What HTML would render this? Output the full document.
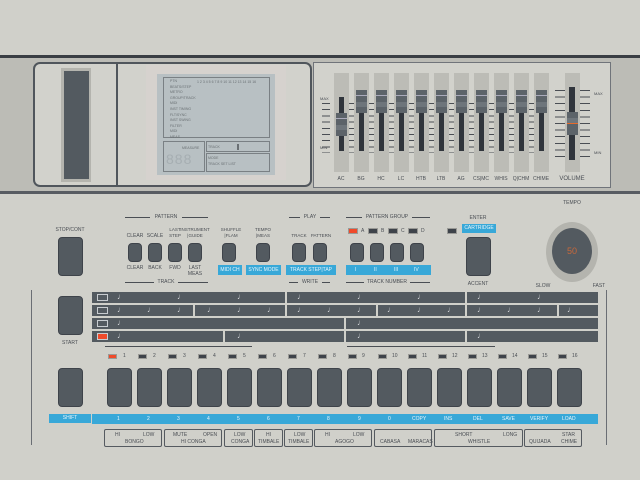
<!DOCTYPE html>
<html><head><meta charset="utf-8"><style>
*{margin:0;padding:0;box-sizing:border-box}
body{width:640px;height:480px;background:#d0d0ca;position:relative;overflow:hidden;font-family:"Liberation Sans",sans-serif;color:#4a4e54}
div{position:absolute}
.t{font-size:5px;line-height:6px;white-space:nowrap;text-align:center;letter-spacing:0}
.b{background:#535a60;border:1px solid #3e434a;border-radius:4px}
.sb{background:#535a60;border:1px solid #3e434a;border-radius:4px;width:14px;height:19px;top:243px}
.bl{background:#38a8d8;color:#e8f4fa}
.hl{height:1px;background:#4a4e54}
.strip{width:15px;top:73px;height:99px;background:#bcbcb6}
.slot{width:5px;background:#30353c;top:113px;height:38px}
.hd{width:11px;height:23px;background:#5c6369;top:90px}
.hd:before{content:"";position:absolute;left:0;right:0;top:5px;height:1px;background:#aab}
.hd:after{content:"";position:absolute;left:0;right:0;top:12px;height:5px;background:#6e757b}
.lab{top:176px;font-size:5px;width:20px;text-align:center}
.row{background:#535a60;height:11px}
.led{width:9px;height:5px;background:#3e434a;border:1px solid #9a9a96;top:354px}
.n{font-size:5px;top:353px}
.st{width:25px;height:39px;top:368px}
.lb{border:1px solid #555a60;border-radius:2px;top:429px;height:18px;font-size:5px}
.lb span{position:absolute;white-space:nowrap}
.nt{color:#e0e2e4;font-size:8px;line-height:8px}
</style></head><body>
<div style="left:0;top:55px;width:640px;height:3px;background:#3a3e44"></div>
<div style="left:0;top:58px;width:640px;height:133px;background:#bcbcb6"></div>
<div style="left:0;top:191px;width:640px;height:3px;background:#585c62"></div>

<div style="left:33px;top:62px;width:279px;height:125px;border:2px solid #50565c;border-radius:7px;background:#d2d2cc"></div>
<div style="left:116px;top:64px;width:2px;height:121px;background:#50565c"></div>
<div style="left:61px;top:68px;width:30px;height:114px;background:#b4b4ae"></div>
<div style="left:64px;top:71px;width:25px;height:108px;background:#535a60"></div>
<div style="left:146px;top:65px;width:140px;height:115px;background:#d6d2ce"></div>
<div style="left:157px;top:74px;width:118px;height:101px;background:#b8c0c3"></div>
<div style="left:163px;top:77px;width:107px;height:61px;border:1px solid #7a8084"></div>
<div style="left:163px;top:141px;width:42px;height:31px;border:1px solid #7a8084"></div>
<div style="left:206px;top:141px;width:64px;height:11px;border:1px solid #7a8084"></div>
<div style="left:206px;top:153px;width:64px;height:19px;border:1px solid #7a8084"></div>
<div class="t" style="left:170px;top:79px;font-size:3.5px;color:#6a7074;text-align:left;line-height:5.6px">PTN<br>BEATS/STEP<br>METRO<br>GROUP/TRACK<br>MIDI<br>INST TIMING<br>FLT/SYNC<br>INST SWING<br>FILTER<br>MIDI<br>MEAS</div>
<div class="t" style="left:197px;top:79px;font-size:3.5px;color:#6a7074">1 2 3 4 5 6 7 8 9 10 11 12 13 14 15 16</div>
<div class="t" style="left:182px;top:145px;font-size:3.5px;color:#6a7074">MEASURE</div>
<div style="left:166px;top:151px;font-size:14px;color:#a6aeb2;letter-spacing:1px">888</div>
<div class="t" style="left:208px;top:144px;font-size:3.5px;color:#6a7074">TRACK</div>
<div style="left:237px;top:144px;width:2px;height:6px;background:#6a7074"></div>
<div class="t" style="left:208px;top:155px;font-size:3.5px;color:#6a7074;text-align:left">MODE<br>TRACK SET LIST</div>

<div style="left:313px;top:62px;width:298px;height:126px;background:#d2d2cc;border:1px solid #70747a"></div>
<div class="t" style="left:320px;top:96px;font-size:4px">MAX</div><div class="t" style="left:320px;top:145px;font-size:4px">MIN</div>
<div class="t" style="left:594px;top:91px;font-size:4px">MAX</div><div class="t" style="left:594px;top:150px;font-size:4px">MIN</div>
<div style="left:322px;top:103px;width:226px;height:50px;background:repeating-linear-gradient(#4a4e54 0 1px,transparent 1px 6.2px)"></div>
<div style="left:330px;top:103px;width:4px;height:50px;background:#d2d2cc"></div>
<div style="left:555px;top:90px;width:10px;height:70px;background:repeating-linear-gradient(#4a4e54 0 1px,transparent 1px 6.6px)"></div>
<div style="left:580px;top:90px;width:10px;height:70px;background:repeating-linear-gradient(#4a4e54 0 1px,transparent 1px 6.6px)"></div>

<div class="strip" style="left:334px"></div><div class="slot" style="left:339px;top:97px;height:54px"></div><div class="hd" style="left:336px;top:113px"></div>
<div class="strip" style="left:354px"></div><div class="slot" style="left:359px"></div><div class="hd" style="left:356px"></div>
<div class="strip" style="left:374px"></div><div class="slot" style="left:379px"></div><div class="hd" style="left:376px"></div>
<div class="strip" style="left:394px"></div><div class="slot" style="left:399px"></div><div class="hd" style="left:396px"></div>
<div class="strip" style="left:414px"></div><div class="slot" style="left:419px"></div><div class="hd" style="left:416px"></div>
<div class="strip" style="left:434px"></div><div class="slot" style="left:439px"></div><div class="hd" style="left:436px"></div>
<div class="strip" style="left:454px"></div><div class="slot" style="left:459px"></div><div class="hd" style="left:456px"></div>
<div class="strip" style="left:474px"></div><div class="slot" style="left:479px"></div><div class="hd" style="left:476px"></div>
<div class="strip" style="left:494px"></div><div class="slot" style="left:499px"></div><div class="hd" style="left:496px"></div>
<div class="strip" style="left:514px"></div><div class="slot" style="left:519px"></div><div class="hd" style="left:516px"></div>
<div class="strip" style="left:534px"></div><div class="slot" style="left:539px"></div><div class="hd" style="left:536px"></div>
<div class="strip" style="left:565px"></div><div class="slot" style="left:569px;top:87px;height:73px;width:6px"></div>
<div style="left:567px;top:112px;width:11px;height:23px;background:#5c6369"><div style="left:0;top:6px;width:11px;height:5px;background:#6e757b"></div><div style="left:0;top:11px;width:11px;height:1px;background:#e86a2a"></div></div>
<div class="lab" style="left:331px">AC</div><div class="lab" style="left:351px">BG</div><div class="lab" style="left:371px">HC</div><div class="lab" style="left:391px">LC</div><div class="lab" style="left:411px">HTB</div><div class="lab" style="left:431px">LTB</div><div class="lab" style="left:451px">AG</div><div class="lab" style="left:471px">CS|MC</div><div class="lab" style="left:491px">WHIS</div><div class="lab" style="left:511px">Q|CHM</div><div class="lab" style="left:531px">CHIME</div>
<div class="lab" style="left:557px;width:30px;font-size:6px">VOLUME</div>

<div class="t" style="left:50px;top:227px;width:40px">STOP/CONT</div>
<div class="b" style="left:58px;top:237px;width:25px;height:39px"></div>
<div class="b" style="left:58px;top:296px;width:25px;height:39px"></div>
<div class="t" style="left:50px;top:340px;width:40px">START</div>

<div class="hl" style="left:125px;top:217px;width:83px"></div><div class="t" style="left:150px;top:214px;width:32px;background:#d0d0ca">PATTERN</div>
<div class="hl" style="left:289px;top:217px;width:41px"></div><div class="t" style="left:300px;top:214px;width:20px;background:#d0d0ca">PLAY</div>
<div class="hl" style="left:346px;top:217px;width:84px"></div><div class="t" style="left:362px;top:214px;width:50px;background:#d0d0ca">PATTERN GROUP</div>
<div class="t" style="left:465px;top:215px;width:26px">ENTER</div>
<div class="t" style="left:558px;top:200px;width:28px">TEMPO</div>

<div class="t" style="left:123px;top:233px;width:24px">CLEAR</div>
<div class="t" style="left:143px;top:233px;width:24px">SCALE</div>
<div class="t" style="left:163px;top:227px;width:24px;font-size:4.5px">LAST<br>STEP</div>
<div class="t" style="left:180px;top:227px;width:30px;font-size:4.5px">INSTRUMENT<br>|GUIDE</div>
<div class="t" style="left:216px;top:227px;width:30px;font-size:4.5px">SHUFFLE<br>|FLAM</div>
<div class="t" style="left:250px;top:227px;width:26px;font-size:4.5px">TEMPO<br>|MEAS</div>
<div class="t" style="left:287px;top:233px;width:24px;font-size:4.5px">TRACK</div>
<div class="t" style="left:308px;top:233px;width:26px;font-size:4.5px">PATTERN</div>
<div class="sb" style="left:128px"></div><div class="sb" style="left:148px"></div><div class="sb" style="left:168px"></div><div class="sb" style="left:188px"></div>
<div class="sb" style="left:222px"></div><div class="sb" style="left:256px"></div><div class="sb" style="left:292px"></div><div class="sb" style="left:313px"></div>
<div class="t" style="left:123px;top:265px;width:24px">CLEAR</div>
<div class="t" style="left:143px;top:265px;width:24px">BACK</div>
<div class="t" style="left:163px;top:265px;width:24px">FWD</div>
<div class="t" style="left:183px;top:265px;width:24px">LAST<br>MEAS</div>
<div class="t bl" style="left:218px;top:265px;width:24px;height:10px;line-height:10px">MIDI CH</div>
<div class="t bl" style="left:246px;top:265px;width:35px;height:10px;line-height:10px">SYNC MODE</div>
<div class="t bl" style="left:286px;top:265px;width:50px;height:10px;line-height:10px">TRACK STEP|TAP</div>

<div style="left:348px;top:228px;width:10px;height:6px;background:#f04a2a;border:1px solid #9a9a96"></div><div class="t" style="left:361px;top:228px">A</div>
<div style="left:368px;top:228px;width:10px;height:6px;background:#3e434a;border:1px solid #9a9a96"></div><div class="t" style="left:381px;top:228px">B</div>
<div style="left:388px;top:228px;width:10px;height:6px;background:#3e434a;border:1px solid #9a9a96"></div><div class="t" style="left:401px;top:228px">C</div>
<div style="left:408px;top:228px;width:10px;height:6px;background:#3e434a;border:1px solid #9a9a96"></div><div class="t" style="left:421px;top:228px">D</div>
<div style="left:447px;top:228px;width:10px;height:6px;background:#3e434a;border:1px solid #9a9a96"></div>
<div class="t bl" style="left:462px;top:224px;width:34px;height:9px;line-height:9px">CARTRIDGE</div>
<div class="sb" style="left:350px"></div><div class="sb" style="left:370px"></div><div class="sb" style="left:390px"></div><div class="sb" style="left:410px"></div>
<div class="bl" style="left:346px;top:265px;width:85px;height:10px;font-size:5px;line-height:10px"><span style="position:absolute;left:9px">I</span><span style="position:absolute;left:28px">II</span><span style="position:absolute;left:48px">III</span><span style="position:absolute;left:68px">IV</span></div>
<div class="b" style="left:466px;top:237px;width:25px;height:39px"></div>
<div class="t" style="left:463px;top:281px;width:30px">ACCENT</div>
<div style="left:546px;top:222px;width:52px;height:60px;border-radius:50%;background:#b4b4ae"></div>
<div style="left:552px;top:228px;width:40px;height:46px;border-radius:50%;background:#535a60"></div>
<div style="left:552px;top:246px;width:40px;text-align:center;font-size:9px;color:#c8683a">50</div>
<div class="t" style="left:533px;top:283px;width:20px">SLOW</div><div class="t" style="left:589px;top:283px;width:20px">FAST</div>

<div class="hl" style="left:125px;top:282px;width:83px"></div><div class="t" style="left:154px;top:279px;width:24px;background:#d0d0ca">TRACK</div>
<div class="hl" style="left:289px;top:282px;width:41px"></div><div class="t" style="left:298px;top:279px;width:24px;background:#d0d0ca">WRITE</div>
<div class="hl" style="left:346px;top:282px;width:84px"></div><div class="t" style="left:364px;top:279px;width:46px;background:#d0d0ca">TRACK NUMBER</div>
<div style="left:31px;top:290px;width:1px;height:155px;background:#6a6e74"></div>
<div style="left:606px;top:290px;width:1px;height:155px;background:#6a6e74"></div>

<div class="row" style="left:92px;top:292px;width:193px"></div><div class="row" style="left:287px;top:292px;width:178px"></div><div class="row" style="left:467px;top:292px;width:131px"></div>
<div class="row" style="left:92px;top:305px;width:101px"></div><div class="row" style="left:195px;top:305px;width:90px"></div><div class="row" style="left:287px;top:305px;width:89px"></div><div class="row" style="left:378px;top:305px;width:87px"></div><div class="row" style="left:467px;top:305px;width:90px"></div><div class="row" style="left:559px;top:305px;width:39px"></div>
<div class="row" style="left:92px;top:318px;width:252px"></div><div class="row" style="left:346px;top:318px;width:252px"></div>
<div class="row" style="left:92px;top:331px;width:131px"></div><div class="row" style="left:225px;top:331px;width:119px"></div><div class="row" style="left:346px;top:331px;width:119px"></div><div class="row" style="left:467px;top:331px;width:131px"></div>
<div style="left:97px;top:294px;width:11px;height:7px;border:1px solid #c8ccd0"></div>
<div style="left:97px;top:307px;width:11px;height:7px;border:1px solid #c8ccd0"></div>
<div style="left:97px;top:320px;width:11px;height:7px;border:1px solid #c8ccd0"></div>
<div style="left:97px;top:333px;width:11px;height:7px;background:#f04a2a;border:1px solid #c8ccd0"></div>
<div class="nt" style="left:117px;top:293px">♩</div><div class="nt" style="left:177px;top:293px">♩</div><div class="nt" style="left:237px;top:293px">♩</div><div class="nt" style="left:297px;top:293px">♩</div><div class="nt" style="left:357px;top:293px">♩</div><div class="nt" style="left:417px;top:293px">♩</div><div class="nt" style="left:477px;top:293px">♩</div><div class="nt" style="left:537px;top:293px">♩</div>
<div class="nt" style="left:117px;top:306px">♩</div><div class="nt" style="left:147px;top:306px">♩</div><div class="nt" style="left:177px;top:306px">♩</div><div class="nt" style="left:207px;top:306px">♩</div><div class="nt" style="left:237px;top:306px">♩</div><div class="nt" style="left:267px;top:306px">♩</div><div class="nt" style="left:297px;top:306px">♩</div><div class="nt" style="left:327px;top:306px">♩</div><div class="nt" style="left:357px;top:306px">♩</div><div class="nt" style="left:387px;top:306px">♩</div><div class="nt" style="left:417px;top:306px">♩</div><div class="nt" style="left:447px;top:306px">♩</div><div class="nt" style="left:477px;top:306px">♩</div><div class="nt" style="left:507px;top:306px">♩</div><div class="nt" style="left:537px;top:306px">♩</div><div class="nt" style="left:567px;top:306px">♩</div>
<div class="nt" style="left:117px;top:319px">♩</div><div class="nt" style="left:357px;top:319px">♩</div>
<div class="nt" style="left:117px;top:332px">♩</div><div class="nt" style="left:237px;top:332px">♩</div><div class="nt" style="left:357px;top:332px">♩</div><div class="nt" style="left:477px;top:332px">♩</div>

<div class="hl" style="left:105px;top:346px;width:147px"></div><div class="hl" style="left:347px;top:346px;width:148px"></div>
<div class="led" style="left:108px;background:#f04a2a"></div><div class="led" style="left:138px"></div><div class="led" style="left:168px"></div><div class="led" style="left:198px"></div><div class="led" style="left:228px"></div><div class="led" style="left:258px"></div><div class="led" style="left:288px"></div><div class="led" style="left:318px"></div><div class="led" style="left:348px"></div><div class="led" style="left:378px"></div><div class="led" style="left:408px"></div><div class="led" style="left:438px"></div><div class="led" style="left:468px"></div><div class="led" style="left:498px"></div><div class="led" style="left:528px"></div><div class="led" style="left:558px"></div>
<div class="n" style="left:123px">1</div><div class="n" style="left:153px">2</div><div class="n" style="left:183px">3</div><div class="n" style="left:213px">4</div><div class="n" style="left:243px">5</div><div class="n" style="left:273px">6</div><div class="n" style="left:303px">7</div><div class="n" style="left:333px">8</div><div class="n" style="left:362px">9</div><div class="n" style="left:392px">10</div><div class="n" style="left:422px">11</div><div class="n" style="left:452px">12</div><div class="n" style="left:482px">13</div><div class="n" style="left:512px">14</div><div class="n" style="left:542px">15</div><div class="n" style="left:572px">16</div>

<div class="b st" style="left:58px"></div>
<div class="b st" style="left:107px"></div><div class="b st" style="left:137px"></div><div class="b st" style="left:167px"></div><div class="b st" style="left:197px"></div><div class="b st" style="left:227px"></div><div class="b st" style="left:257px"></div><div class="b st" style="left:287px"></div><div class="b st" style="left:317px"></div><div class="b st" style="left:347px"></div><div class="b st" style="left:377px"></div><div class="b st" style="left:407px"></div><div class="b st" style="left:437px"></div><div class="b st" style="left:467px"></div><div class="b st" style="left:497px"></div><div class="b st" style="left:527px"></div><div class="b st" style="left:557px"></div>

<div class="t bl" style="left:49px;top:414px;width:42px;height:9px;line-height:9px">SHIFT</div>
<div class="bl" style="left:92px;top:414px;width:506px;height:10px;font-size:5px;line-height:10px">
<span style="position:absolute;left:25px">1</span><span style="position:absolute;left:55px">2</span><span style="position:absolute;left:85px">3</span><span style="position:absolute;left:115px">4</span><span style="position:absolute;left:145px">5</span><span style="position:absolute;left:175px">6</span><span style="position:absolute;left:205px">7</span><span style="position:absolute;left:235px">8</span><span style="position:absolute;left:266px">9</span><span style="position:absolute;left:296px">0</span><span style="position:absolute;left:320px">COPY</span><span style="position:absolute;left:352px">INS</span><span style="position:absolute;left:381px">DEL</span><span style="position:absolute;left:410px">SAVE</span><span style="position:absolute;left:438px">VERIFY</span><span style="position:absolute;left:470px">LOAD</span></div>

<div class="lb" style="left:104px;width:58px"><span style="left:10px;top:2px">HI</span><span style="left:38px;top:2px">LOW</span><span style="left:20px;top:9px">BONGO</span></div>
<div class="lb" style="left:164px;width:58px"><span style="left:8px;top:2px">MUTE</span><span style="left:38px;top:2px">OPEN</span><span style="left:16px;top:9px">HI CONGA</span></div>
<div class="lb" style="left:224px;width:29px"><span style="left:9px;top:2px">LOW</span><span style="left:6px;top:9px">CONGA</span></div>
<div class="lb" style="left:254px;width:29px"><span style="left:11px;top:2px">HI</span><span style="left:3px;top:9px">TIMBALE</span></div>
<div class="lb" style="left:284px;width:29px"><span style="left:9px;top:2px">LOW</span><span style="left:3px;top:9px">TIMBALE</span></div>
<div class="lb" style="left:314px;width:58px"><span style="left:10px;top:2px">HI</span><span style="left:38px;top:2px">LOW</span><span style="left:20px;top:9px">AGOGO</span></div>
<div class="lb" style="left:374px;width:58px"><span style="left:5px;top:9px">CABASA</span><span style="left:33px;top:9px">MARACAS</span></div>
<div class="lb" style="left:434px;width:89px"><span style="left:20px;top:2px">SHORT</span><span style="left:68px;top:2px">LONG</span><span style="left:33px;top:9px">WHISTLE</span></div>
<div class="lb" style="left:524px;width:58px"><span style="left:37px;top:2px">STAR</span><span style="left:4px;top:9px">QUIJADA</span><span style="left:36px;top:9px">CHIME</span></div>
</body></html>
